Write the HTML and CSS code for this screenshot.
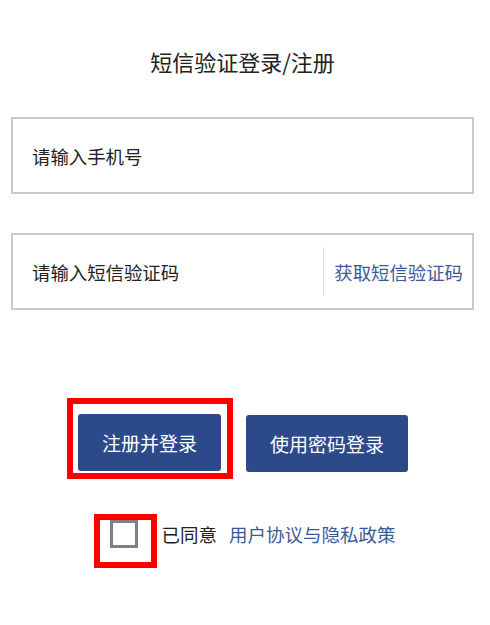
FILE: index.html
```html
<!DOCTYPE html>
<html lang="zh-CN">
<head>
    <meta charset="UTF-8">
    <meta name="viewport" content="width=device-width, initial-scale=1.0">
    <title>短信验证登录/注册</title>
    <link rel="stylesheet" href="styles.css">
</head>
<body>
    <div class="login-page">
        <h1 class="login-title">短信验证登录/注册</h1>

        <div class="field">
            <input class="field-input" type="tel" placeholder="请输入手机号">
        </div>

        <div class="field field-code">
            <input class="field-input" type="text" placeholder="请输入短信验证码">
            <span class="field-divider"></span>
            <a class="code-link" href="#">获取短信验证码</a>
        </div>

        <div class="actions">
            <div class="mark mark-button">
                <button class="btn" type="button">注册并登录</button>
            </div>
            <button class="btn btn-second" type="button">使用密码登录</button>
        </div>

        <div class="agree-row">
            <div class="mark mark-check">
                <span class="check-box"></span>
            </div>
            <span class="agree-text">已同意</span>
            <a class="agree-link" href="#">用户协议与隐私政策</a>
        </div>
    </div>
</body>
</html>
```

FILE: styles.css
```css
* {
    margin: 0;
    padding: 0;
    box-sizing: border-box;
}

body {
    font-family: "Noto Sans CJK SC", "Noto Sans", sans-serif;
    background: #fff;
    color: #222;
}

.login-page {
    padding: 46px 16px 0 11px;
}

.login-title {
    font-size: 22px;
    font-weight: 400;
    line-height: 30px;
    text-align: center;
    color: #222;
    margin-bottom: 41px;
}

.field {
    display: flex;
    align-items: center;
    height: 77px;
    border: 2px solid #cacaca;
}

.field + .field {
    margin-top: 39px;
}

.field-input {
    flex: 1;
    min-width: 0;
    height: 100%;
    border: none;
    outline: none;
    padding: 0 19px;
    font-family: inherit;
    font-size: 18.4px;
    color: #222;
    background: transparent;
}

.field-input::placeholder {
    color: #222;
}

.field-divider {
    width: 1px;
    height: 49px;
    background: #dcdcdc;
}

.code-link {
    padding: 0 9px 0 10px;
    font-size: 18.4px;
    color: #3a5a96;
    text-decoration: none;
    white-space: nowrap;
}

.actions {
    display: flex;
    justify-content: center;
    align-items: flex-start;
    gap: 13px;
    margin-top: 88px;
    padding-right: 10px;
}

.mark {
    border: 6px solid #f00;
}

.mark-button {
    padding: 10px 6px 2px 5px;
}

.btn {
    height: 57px;
    padding: 0 24px;
    border: none;
    border-radius: 3px;
    background: #2c4a8a;
    color: #fff;
    font-family: inherit;
    font-size: 19px;
    cursor: pointer;
}

.btn-second {
    margin-top: 17px;
}

.agree-row {
    display: flex;
    justify-content: center;
    align-items: flex-start;
    margin-top: 35px;
    padding-left: 5px;
}

.mark-check {
    padding: 0 13px 14px 10px;
}

.check-box {
    display: block;
    width: 28px;
    height: 28px;
    border: 3px solid #808080;
}

.agree-text,
.agree-link {
    font-size: 18.5px;
    line-height: 24px;
    margin-top: 8px;
}

.agree-text {
    margin-left: 4px;
    color: #222;
}

.agree-link {
    margin-left: 12px;
    color: #3a5a96;
    text-decoration: none;
}
```
